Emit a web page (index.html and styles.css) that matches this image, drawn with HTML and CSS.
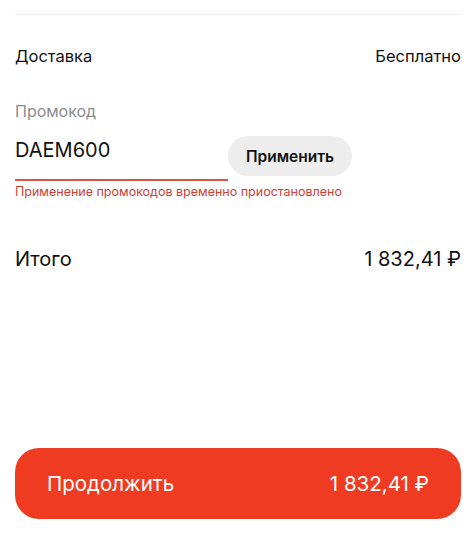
FILE: index.html
```html
<!DOCTYPE html>
<html lang="ru">
<head>
    <meta charset="UTF-8">
    <meta name="viewport" content="width=device-width, initial-scale=1.0">
    <title>Оформление заказа</title>
    <link rel="stylesheet" href="styles.css">
</head>
<body>
    <div class="page">
        <div class="divider"></div>

        <div class="row delivery">
            <span>Доставка</span>
            <span>Бесплатно</span>
        </div>

        <div class="promo">
            <div class="promo-label">Промокод</div>
            <div class="promo-row">
                <div class="promo-input">DAEM600</div>
                <button class="promo-apply">Применить</button>
            </div>
            <div class="promo-error">Применение промокодов временно приостановлено</div>
        </div>

        <div class="row total">
            <span>Итого</span>
            <span>1&nbsp;832,41&nbsp;₽</span>
        </div>

        <button class="continue">
            <span>Продолжить</span>
            <span>1&nbsp;832,41&nbsp;₽</span>
        </button>
    </div>
</body>
</html>
```

FILE: styles.css
```css
body {
    margin: 0;
    padding: 0;
    font-family: Inter, "Noto Sans", sans-serif;
    color: #111;
    background: #fff;
}
.page {
    display: flex;
    flex-direction: column;
    height: 100vh;
    padding: 0 15px;
    box-sizing: border-box;
}
.divider {
    margin-top: 14px;
    height: 1px;
    background: #ececec;
}
.row {
    display: flex;
    justify-content: space-between;
    align-items: center;
}
.delivery {
    margin-top: 30px;
    font-size: 16.5px;
    line-height: 22px;
}
.promo {
    margin-top: 34px;
}
.promo-label {
    font-size: 16px;
    line-height: 20px;
    color: #8c8c8c;
}
.promo-row {
    display: flex;
    align-items: flex-start;
    margin-top: 14px;
}
.promo-input {
    width: 213px;
    height: 46px;
    box-sizing: border-box;
    padding-top: 3px;
    font-size: 20px;
    line-height: 24px;
    border-bottom: 2px solid #dd5443;
}
.promo-apply {
    margin-top: 1px;
    width: 124px;
    height: 40px;
    border: none;
    border-radius: 20px;
    background: #ededed;
    font-family: inherit;
    font-size: 15.5px;
    font-weight: 600;
    color: #111;
    padding: 0;
}
.promo-error {
    margin-top: 3px;
    font-size: 12.5px;
    line-height: 16px;
    color: #cc4134;
}
.total {
    margin-top: 47px;
    font-size: 20px;
    line-height: 24px;
}
.continue {
    margin-top: auto;
    margin-bottom: 26px;
    height: 71px;
    border: none;
    border-radius: 24px;
    background: #ee3b21;
    color: #fff;
    font-family: inherit;
    font-size: 20.5px;
    display: flex;
    justify-content: space-between;
    align-items: center;
    padding: 0 32px;
}
```
